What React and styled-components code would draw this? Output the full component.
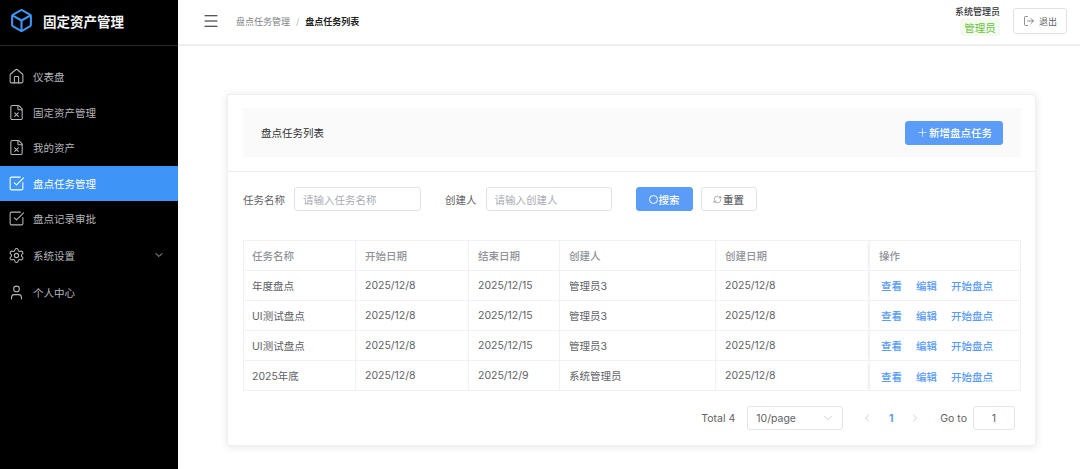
import React from "react";
import styled, { createGlobalStyle } from "styled-components";
import { Box, House, FileX, SquareCheckBig, Settings, User, ChevronDown, ChevronLeft, ChevronRight, Menu as MenuIcon, LogOut, Plus, RefreshCw } from "lucide-react";

const FONT = `Inter, "Liberation Sans", "Noto Sans CJK SC", sans-serif`;

const Global = createGlobalStyle`
  html, body { margin: 0; padding: 0; height: 469px; overflow: hidden; background: #fff; }
  body { font-family: ${FONT}; }
  * { box-sizing: border-box; }
`;

const Shell = styled.div`
  display: flex;
  width: 1080px;
  height: 469px;
`;

const Sidebar = styled.aside`
  width: 178px;
  flex: none;
  background: #000;
  color: #bfc3c9;
`;

const Brand = styled.div`
  height: 46px;
  display: flex;
  align-items: center;
  gap: 9px;
  padding: 0 0 4px 9px;
  border-bottom: 1px solid #2b2b2b;
  color: #f4f4f4;
  font-size: 13.5px;
  font-weight: 600;
  svg { color: #3f94f7; }
`;

const MenuList = styled.nav`
  display: flex;
  flex-direction: column;
  padding-top: 13px;
`;

const MenuItem = styled.div`
  height: ${(p) => (p.$tall ? "37.5px" : "35.5px")};
  display: flex;
  align-items: center;
  gap: 8px;
  padding: 0 13px 0 8px;
  font-size: 10.5px;
  background: ${(p) => (p.$active ? "#3f94f7" : "transparent")};
  color: ${(p) => (p.$active ? "#fff" : "#b4b6ba")};
`;

const MenuLabel = styled.span`
  flex: 1;
`;

const Main = styled.main`
  flex: 1;
  min-width: 0;
  display: flex;
  flex-direction: column;
`;

const TopBar = styled.header`
  height: 46px;
  flex: none;
  display: flex;
  align-items: center;
  padding: 0 13px 2px 24px;
  border-bottom: 2px solid #eeeeee;
`;

const Crumbs = styled.div`
  display: flex;
  align-items: center;
  gap: 6px;
  margin-left: 16px;
  flex: 1;
  font-size: 9px;
  color: #7d7f84;
`;

const CrumbSep = styled.span`
  color: #b5b7bb;
`;

const CrumbCurrent = styled.span`
  color: #222;
  font-weight: 600;
`;

const UserBox = styled.div`
  display: flex;
  flex-direction: column;
  align-items: flex-end;
  gap: 0;
  margin-right: 13px;
  margin-top: -1px;
`;

const UserName = styled.div`
  font-size: 9px;
  color: #303133;
  font-weight: 500;
`;

const RoleTag = styled.div`
  height: 18px;
  width: 40px;
  display: flex;
  align-items: center;
  justify-content: center;
  background: #f4fbef;
  color: #67c23a;
  font-size: 10.5px;
  border-radius: 3px;
`;

const LogoutButton = styled.button`
  width: 54px;
  height: 26px;
  display: flex;
  align-items: center;
  justify-content: center;
  gap: 4px;
  background: #fff;
  border: 1px solid #e0e2e7;
  border-radius: 3px;
  font: 9px ${FONT};
  color: #606266;
  padding: 0;
`;

const Content = styled.div`
  padding: 48px 44px 0 49px;
`;

const Card = styled.section`
  height: 352px;
  background: #fff;
  border: 1px solid #eeeff2;
  border-radius: 3px;
  box-shadow: 0 1px 9px rgba(0, 0, 0, 0.1);
`;

const CardHead = styled.div`
  margin: 13px 14px 0 15px;
  height: 49px;
  padding: 0 18px;
  display: flex;
  align-items: center;
  justify-content: space-between;
  background: #fafafa;
  font-size: 10.5px;
  color: #303133;
`;

const CardTitle = styled.span`
  margin-top: -1px;
`;

const Divider = styled.div`
  height: 1px;
  background: #ebeef1;
  margin-top: 14px;
`;

const FilterRow = styled.div`
  height: 24px;
  margin: 15px 0 29px 15px;
  display: flex;
  align-items: center;
`;

const FieldLabel = styled.label`
  font-size: 10.5px;
  color: #606266;
  margin-right: ${(p) => p.$gap}px;
`;

const Input = styled.div`
  width: ${(p) => p.$w}px;
  height: 24px;
  padding: 0 8px;
  display: flex;
  align-items: center;
  border: 1px solid #dfe2e8;
  border-radius: 3px;
  font-size: 10.5px;
  color: #a8abb2;
  margin-right: ${(p) => p.$gap}px;
`;

const Button = styled.button`
  height: ${(p) => p.$h || 24}px;
  width: ${(p) => p.$w}px;
  margin-right: ${(p) => p.$gap || 0}px;
  display: flex;
  align-items: center;
  justify-content: center;
  gap: ${(p) => p.$iconGap ?? 1}px;
  padding: 0;
  border-radius: 3px;
  font: 500 10.5px ${FONT};
  border: 1px solid ${(p) => (p.$primary ? "#5a9cf8" : "#dfe2e8")};
  background: ${(p) => (p.$primary ? "#5a9cf8" : "#fff")};
  color: ${(p) => (p.$primary ? "#fff" : "#606266")};
`;

const SearchGlyph = styled.span`
  width: 9px;
  height: 9px;
  border: 1px solid #fff;
  border-radius: 50%;
`;

const Table = styled.table`
  width: 777px;
  margin-left: 15px;
  table-layout: fixed;
  border-collapse: collapse;
  font-size: 10.5px;
`;

const Col = styled.col`
  width: ${(p) => p.$w}px;
`;

const Th = styled.th`
  height: 29.5px;
  padding: 0 9px;
  text-align: left;
  font-weight: 500;
  color: #909399;
  border: 1px solid #f0f1f6;
  &:first-child { padding-left: 8px; }
`;

const Td = styled.td`
  height: 30.2px;
  padding: 0 9px;
  color: #606266;
  border: 1px solid #f0f1f6;
  &:first-child { padding-left: 8px; }
`;

const ActionHead = styled(Th)`
  box-shadow: -3px 0 3px -2px rgba(0, 0, 0, 0.14);
`;

const ActionCell = styled(Td)`
  padding-left: 11px;
  box-shadow: -3px 0 3px -2px rgba(0, 0, 0, 0.14);
`;

const Links = styled.div`
  display: flex;
  gap: 14px;
  font-weight: 500;
  color: #5a9cf8;
  margin-top: 1px;
`;

const Pager = styled.div`
  height: 24px;
  margin: 15px 20px 0 0;
  display: flex;
  align-items: center;
  justify-content: flex-end;
  font-size: 10.5px;
  color: #606266;
`;

const SizeSelect = styled.div`
  width: 96px;
  height: 24px;
  margin: 0 18px 0 12px;
  padding: 0 7px 0 8px;
  display: flex;
  align-items: center;
  justify-content: space-between;
  border: 1px solid #e2e4ea;
  border-radius: 3px;
  svg { color: #b4b7bd; }
`;

const PageNav = styled.div`
  display: flex;
  align-items: center;
  width: 60px;
  justify-content: space-between;
  margin-right: 19px;
  svg { color: #b4b7bd; }
`;

const PageCurrent = styled.span`
  color: #5a9cf8;
  font-weight: 700;
`;

const GotoInput = styled.div`
  width: 42px;
  height: 24px;
  margin-left: 6px;
  display: flex;
  align-items: center;
  justify-content: center;
  border: 1px solid #e2e4ea;
  border-radius: 3px;
`;

const rows = [
  ["年度盘点", "2025/12/8", "2025/12/15", "管理员3", "2025/12/8"],
  ["UI测试盘点", "2025/12/8", "2025/12/15", "管理员3", "2025/12/8"],
  ["UI测试盘点", "2025/12/8", "2025/12/15", "管理员3", "2025/12/8"],
  ["2025年底", "2025/12/8", "2025/12/9", "系统管理员", "2025/12/8"],
];

const menu = [
  { icon: House, label: "仪表盘" },
  { icon: FileX, label: "固定资产管理" },
  { icon: FileX, label: "我的资产" },
  { icon: SquareCheckBig, label: "盘点任务管理", active: true },
  { icon: SquareCheckBig, label: "盘点记录审批" },
  { icon: Settings, label: "系统设置", tall: true, arrow: true },
  { icon: User, label: "个人中心", tall: true },
];

export default function App() {
  return (
    <Shell>
      <Global />
      <Sidebar>
        <Brand>
          <Box size={25} strokeWidth={2} />
          <span>固定资产管理</span>
        </Brand>
        <MenuList>
          {menu.map(({ icon: Icon, label, active, tall, arrow }) => (
            <MenuItem key={label} $active={active} $tall={tall}>
              <Icon size={17} strokeWidth={1.5} />
              <MenuLabel>{label}</MenuLabel>
              {arrow && <ChevronDown size={12} strokeWidth={2} />}
            </MenuItem>
          ))}
        </MenuList>
      </Sidebar>
      <Main>
        <TopBar>
          <MenuIcon size={18} strokeWidth={1.5} color="#202124" />
          <Crumbs>
            <span>盘点任务管理</span>
            <CrumbSep>/</CrumbSep>
            <CrumbCurrent>盘点任务列表</CrumbCurrent>
          </Crumbs>
          <UserBox>
            <UserName>系统管理员</UserName>
            <RoleTag>管理员</RoleTag>
          </UserBox>
          <LogoutButton>
            <LogOut size={12} strokeWidth={1.4} />
            退出
          </LogoutButton>
        </TopBar>
        <Content>
          <Card>
            <CardHead>
              <CardTitle>盘点任务列表</CardTitle>
              <Button $primary $w={98} $h={24} $iconGap={0}>
                <Plus size={13} strokeWidth={1.2} />
                新增盘点任务
              </Button>
            </CardHead>
            <Divider />
            <FilterRow>
              <FieldLabel $gap={9}>任务名称</FieldLabel>
              <Input $w={127} $gap={24}>请输入任务名称</Input>
              <FieldLabel $gap={9}>创建人</FieldLabel>
              <Input $w={126} $gap={24}>请输入创建人</Input>
              <Button $primary $w={57} $gap={8}>
                <SearchGlyph />
                搜索
              </Button>
              <Button $w={56}>
                <RefreshCw size={9} strokeWidth={1.3} />
                重置
              </Button>
            </FilterRow>
            <Table>
              <colgroup>
                <Col $w={112} />
                <Col $w={113} />
                <Col $w={91} />
                <Col $w={156} />
                <Col $w={154} />
                <Col $w={151} />
              </colgroup>
              <thead>
                <tr>
                  <Th>任务名称</Th>
                  <Th>开始日期</Th>
                  <Th>结束日期</Th>
                  <Th>创建人</Th>
                  <Th>创建日期</Th>
                  <ActionHead>操作</ActionHead>
                </tr>
              </thead>
              <tbody>
                {rows.map((r, i) => (
                  <tr key={i}>
                    {r.map((c, j) => (
                      <Td key={j}>{c}</Td>
                    ))}
                    <ActionCell>
                      <Links>
                        <span>查看</span>
                        <span>编辑</span>
                        <span>开始盘点</span>
                      </Links>
                    </ActionCell>
                  </tr>
                ))}
              </tbody>
            </Table>
            <Pager>
              <span>Total 4</span>
              <SizeSelect>
                <span>10/page</span>
                <ChevronDown size={14} strokeWidth={1.1} />
              </SizeSelect>
              <PageNav>
                <ChevronLeft size={12} strokeWidth={1.3} />
                <PageCurrent>1</PageCurrent>
                <ChevronRight size={12} strokeWidth={1.3} />
              </PageNav>
              <span>Go to</span>
              <GotoInput>1</GotoInput>
            </Pager>
          </Card>
        </Content>
      </Main>
    </Shell>
  );
}
